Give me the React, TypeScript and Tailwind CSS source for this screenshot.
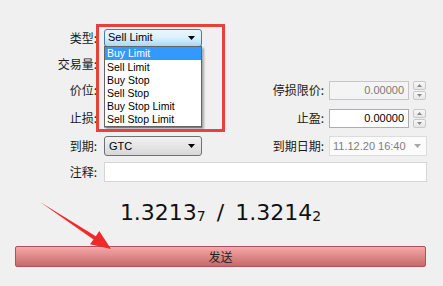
import React from 'react'

// ============================================================
// Order window — pending order form with open type dropdown
// ============================================================

const latin = "font-['Liberation_Sans','Noto_Sans_CJK_SC',sans-serif]"
const cjk = "font-['Noto_Sans_CJK_SC','Liberation_Sans',sans-serif]"

function Label({ children, className = '' }: { children: React.ReactNode; className?: string }) {
  return (
    <span className={`${cjk} text-[12px] leading-none text-[#1a1a1a] text-right ${className}`}>{children}</span>
  )
}

function Arrow({ color = '#000' }: { color?: string }) {
  return (
    <svg width="7" height="4" viewBox="0 0 7 4">
      <path d="M0 0h7L3.5 4z" fill={color} />
    </svg>
  )
}

function Spinner() {
  return (
    <div className="ml-[4px] w-[13px] h-[19px] flex flex-col gap-[1px]">
      <div className="flex-1 border border-[#c9c9c9] bg-gradient-to-b from-[#f8f8f8] to-[#e6e6e6] flex items-center justify-center rounded-[2px]">
        <svg width="5" height="3" viewBox="0 0 5 3"><path d="M0 3h5L2.5 0z" fill="#8a8a8a" /></svg>
      </div>
      <div className="flex-1 border border-[#c9c9c9] bg-gradient-to-b from-[#f8f8f8] to-[#e6e6e6] flex items-center justify-center rounded-[2px]">
        <svg width="5" height="3" viewBox="0 0 5 3"><path d="M0 0h5L2.5 3z" fill="#8a8a8a" /></svg>
      </div>
    </div>
  )
}

const items = ['Buy Limit', 'Sell Limit', 'Buy Stop', 'Sell Stop', 'Buy Stop Limit', 'Sell Stop Limit']

export default function App() {
  return (
    <div className={`relative w-[443px] h-[286px] bg-[#f0f0f0] overflow-hidden ${latin}`}>
      <div className="flex flex-col pt-[28px]">
        {/* 类型 */}
        <div className="flex items-center h-[19px]">
          <Label className="w-[97px]">类型:</Label>
          <div className="ml-[7px] w-[98px] h-[18px] rounded-[3px] border border-[#3c7fb1] bg-gradient-to-b from-[#eaf6fd] via-[#d9f0fc] to-[#a7d9f5] flex items-center justify-between pl-[3px] pr-[6px]">
            <span className="text-[11px] leading-none text-black">Sell Limit</span>
            <Arrow />
          </div>
        </div>

        {/* 交易量 */}
        <div className="flex items-center h-[19px] mt-[7px]">
          <Label className="w-[97px]">交易量:</Label>
          <div className="ml-[7px] w-[98px] h-[19px] bg-white border border-[#abadb3]" />
        </div>

        {/* 价位 / 停损限价 */}
        <div className="flex items-center h-[20px] mt-[7px]">
          <Label className="w-[97px]">价位:</Label>
          <div className="ml-[7px] w-[98px] h-[19px] bg-white border border-[#abadb3]" />
          <Label className="w-[122px]">停损限价:</Label>
          <div className="ml-[5px] w-[80px] h-[19px] bg-[#f4f4f4] border border-[#c6c6c6] flex items-center justify-end pr-[4px]">
            <span className="text-[11px] leading-none text-[#7a7a7a]">0.00000</span>
          </div>
          <Spinner />
        </div>

        {/* 止损 / 止盈 */}
        <div className="flex items-center h-[20px] mt-[8px]">
          <Label className="w-[97px]">止损:</Label>
          <div className="ml-[7px] w-[98px] h-[19px] bg-white border border-[#abadb3]" />
          <Label className="w-[122px]">止盈:</Label>
          <div className="ml-[5px] w-[80px] h-[19px] bg-white border border-[#abadb3] flex items-center justify-end pr-[4px]">
            <span className="text-[11px] leading-none text-black">0.00000</span>
          </div>
          <Spinner />
        </div>

        {/* 到期 / 到期日期 */}
        <div className="flex items-center h-[20px] mt-[8px]">
          <Label className="w-[97px]">到期:</Label>
          <div className="ml-[7px] w-[98px] h-[20px] rounded-[3px] border border-[#707070] bg-gradient-to-b from-[#f2f2f2] to-[#d8d8d8] flex items-center justify-between pl-[4px] pr-[6px]">
            <span className="text-[11px] leading-none text-black">GTC</span>
            <Arrow />
          </div>
          <Label className="w-[122px]">到期日期:</Label>
          <div className="ml-[5px] w-[98px] h-[20px] bg-[#fbfbfb] border border-[#dcdcdc] flex items-center justify-between pl-[3px] pr-[5px]">
            <span className="text-[11px] leading-none text-[#7d7d7d]">11.12.20 16:40</span>
            <Arrow color="#a8a8a8" />
          </div>
        </div>

        {/* 注释 */}
        <div className="flex items-center h-[20px] mt-[6px]">
          <Label className="w-[97px]">注释:</Label>
          <div className="ml-[7px] w-[323px] h-[20px] bg-white border border-[#d5d5d5]" />
        </div>

        {/* price */}
        <div className="mt-[18px] flex justify-center pr-[2px] font-['DejaVu_Sans',sans-serif] text-[22px] leading-[26px] text-[#111]">
          <span>1.3213</span>
          <span className="text-[14px] self-end leading-[20px]">7</span>
          <span className="mx-[11px]">/</span>
          <span>1.3214</span>
          <span className="text-[14px] self-end leading-[20px]">2</span>
        </div>

        {/* send */}
        <div className="mt-[20px] ml-[15px] w-[411px] h-[21px] rounded-[2px] border border-[#b0505a] bg-gradient-to-b from-[#f6a8a8] to-[#c46a6a] flex items-center justify-center">
          <span className={`${cjk} text-[12px] leading-none text-[#222]`}>发送</span>
        </div>
      </div>

      {/* open dropdown list */}
      <div className="absolute left-[104px] top-[46px] w-[98px] h-[81px] bg-white border border-[#646464] shadow-[2px_2px_2px_rgba(0,0,0,0.3)] flex flex-col">
        {items.map((it, i) => (
          <div
            key={it}
            className={`h-[13.2px] flex items-center pl-[2px] text-[10.5px] leading-none ${i === 0 ? 'bg-[#3399ff] text-white' : 'text-black'}`}
          >
            {it}
          </div>
        ))}
      </div>

      {/* red highlight box */}
      <div className="absolute left-[96px] top-[24px] w-[129px] h-[108px] border-[3px] border-[#e8403c]" />

      {/* red arrow */}
      <svg className="absolute left-0 top-0" width="443" height="286" viewBox="0 0 443 286">
        <polygon points="40,202 95.8,236.2 99.3,231 111,249 90,244.2 93.5,239.5" fill="#f02a2a" />
      </svg>
    </div>
  )
}
